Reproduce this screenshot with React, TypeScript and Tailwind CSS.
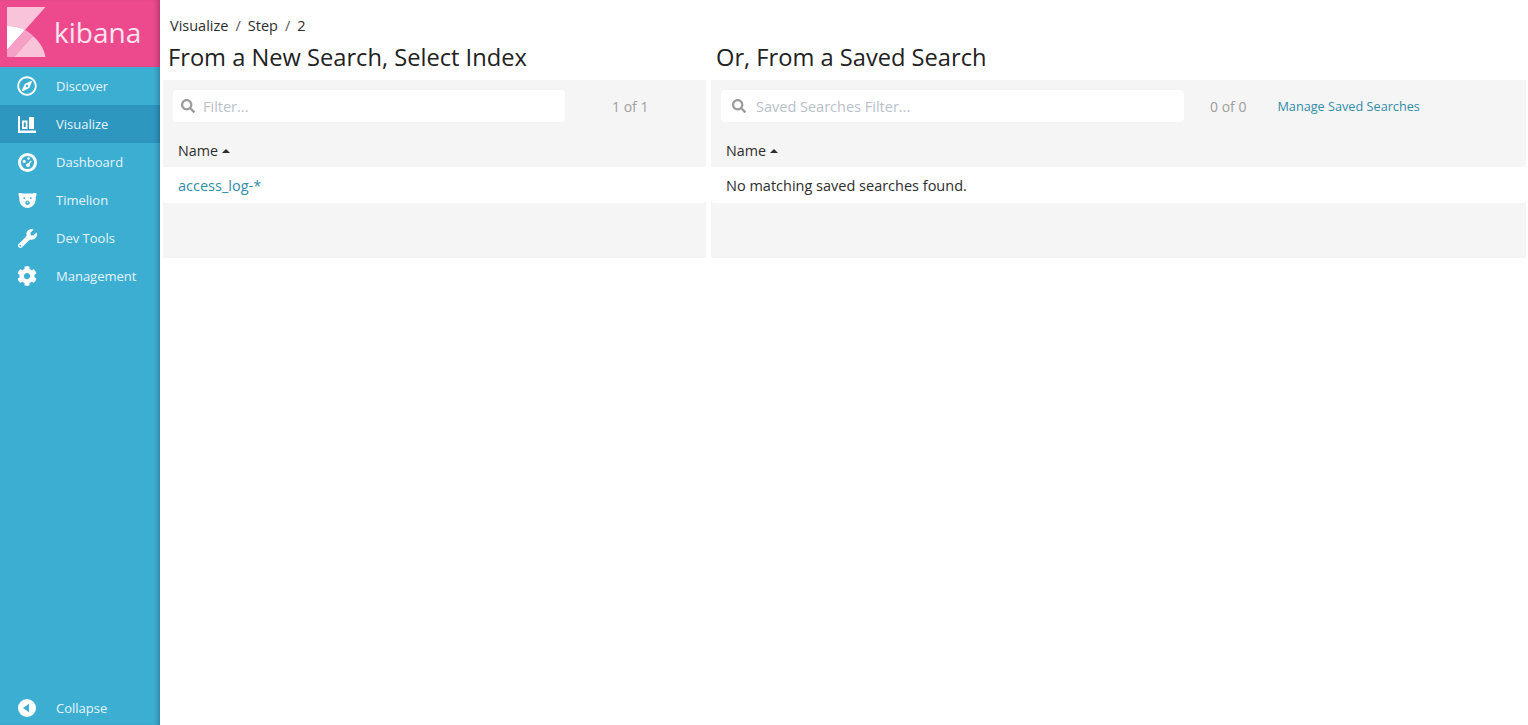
import React from "react";
import { FaRegCompass, FaWrench, FaCog, FaSearch } from "react-icons/fa";

const Bars = () => (
  <svg width="18" height="17" viewBox="0 0 18 17">
    <path d="M0 0h2v14.500h16V17H0z" fill="#fff" />
    <path fillRule="evenodd" d="M4 4.500h5.500V13H4zM5.800 6.500v4.500h1.900V6.500z" fill="#fff" />
    <rect x="11" y="1" width="5" height="12" fill="#fff" />
  </svg>
);

const Gauge = () => (
  <svg width="19" height="19" viewBox="0 0 18 18">
    <circle cx="9" cy="9" r="7.600" fill="none" stroke="#fff" strokeWidth="2.800" />
    <circle cx="5.800" cy="8" r="1.500" fill="#fff" />
    <circle cx="10" cy="5.200" r="1.200" fill="#fff" />
    <circle cx="9.500" cy="11.500" r="1.800" fill="#fff" />
    <path d="M9.500 11.500 12.500 7.500" stroke="#fff" strokeWidth="1.300" />
  </svg>
);

const Bear = () => (
  <svg width="19" height="15" viewBox="0 0 18 15">
    <path
      fillRule="evenodd"
      fill="#fff"
      d="M0 .8C0 .3.500 0 2 0c1 0 1.700.2 2 .6h10c.3-.4 1-.6 2-.6 1.500 0 2 .3 2 .8 0 1.500-.2 2.700-.7 3.500 0 1.500-.1 3.200-.5 4.500C15.500 12.800 12.500 15 9 15s-6.500-2.200-7.800-6.200C.8 7.500.7 5.800.7 4.300.2 3.500 0 2.300 0 .8ZM5.700 4.200a.9.9 0 1 0 0 1.800.9.9 0 0 0 0-1.800Zm6.600 0a.9.9 0 1 0 0 1.800.9.9 0 0 0 0-1.800ZM9 7.500c-1.400 0-2.300 1-2.300 2.300 0 1.300 1 2.100 2.300 2.100s2.300-.8 2.300-2.100c0-1.300-.9-2.300-2.300-2.300Z"
    />
    <path d="M7.800 8.700h2.400L9 10.200z" fill="#fff" />
  </svg>
);

const Collapse = () => (
  <svg width="18" height="18" viewBox="0 0 18 18">
    <circle cx="9" cy="9" r="9" fill="#fff" />
    <path d="M5 9l6-4.300v8.600z" fill="#3caed2" />
  </svg>
);

const Logo = () => (
  <svg width="39" height="50" viewBox="0 0 39 50" className="shrink-0">
    <path d="M0 0H38.500L18 23C13 20.500 7 19 0 19Z" fill="#f9c3da" />
    <path d="M0 19C7 19 13 20.500 18 23L0 43Z" fill="#fff" />
    <path d="M0 43 18 23C21 24.500 24 26.500 26 29L7 50H0Z" fill="#f5a0c4" />
    <path d="M7 50 26 29C32.500 34.500 37 42 38.500 50Z" fill="#f9c3da" />
  </svg>
);

const nav = [
  { label: "Discover", icon: <FaRegCompass size={20} color="#fff" /> },
  { label: "Visualize", icon: <Bars />, active: true },
  { label: "Dashboard", icon: <Gauge /> },
  { label: "Timelion", icon: <Bear /> },
  { label: "Dev Tools", icon: <FaWrench size={19} color="#fff" /> },
  { label: "Management", icon: <FaCog size={20} color="#fff" /> },
];

function NavItem({ label, icon, active }: { label: string; icon: React.ReactNode; active?: boolean }) {
  return (
    <div className={`flex h-[38px] items-center ${active ? "bg-[#2d97c0] shadow-[inset_-5px_0_5px_-3px_rgba(0,0,0,0.25)]" : ""}`}>
      <span className="flex w-[54px] shrink-0 justify-center">{icon}</span>
      <span className="ml-[2px] pt-[2px] text-[13px] text-[#e6f5fa]">{label}</span>
    </div>
  );
}

function SearchBox({ placeholder, width, gap, textGap }: { placeholder: string; width: string; gap: string; textGap: string }) {
  return (
    <div className={`flex h-[32px] items-center rounded-[4px] bg-white ${width}`}>
      <FaSearch size={14} color="#9b9b9b" className={`shrink-0 ${gap}`} />
      <span className={`pt-[2px] text-[14.500px] text-[#b9c0c9] ${textGap}`}>{placeholder}</span>
    </div>
  );
}

function Panel({ top, row }: { top: React.ReactNode; row: React.ReactNode }) {
  return (
    <div className="h-[178px] bg-[#f5f5f5]">
      <div className="flex h-[52px] items-center pl-[10px]">{top}</div>
      <div className="flex h-[35px] items-center pl-[15px] pt-[2px] text-[14.300px] text-[#2d2d2d]">
        Name
        <span className="ml-[4px] h-0 w-0 border-x-[4.500px] border-b-[4.500px] border-x-transparent border-b-[#2d2d2d]" />
      </div>
      <div className="flex h-[36px] items-center rounded-b-[4px] bg-white pl-[15px] pt-[2px] text-[14.500px]">{row}</div>
    </div>
  );
}

export default function App() {
  return (
    <div className="flex h-[725px] w-[1528px] overflow-hidden bg-white font-['Open_Sans',sans-serif]">
      <aside className="flex h-full w-[160px] shrink-0 flex-col bg-[#3caed2] shadow-[inset_-5px_0_5px_-3px_rgba(0,0,0,0.25)]">
        <div className="flex h-[67px] shrink-0 items-start bg-[#ec4a8d] pl-[7px] pt-[7px] shadow-[inset_-5px_0_5px_-3px_rgba(0,0,0,0.25)]">
          <Logo />
          <span className="ml-[8px] mt-[6px] text-[28px] font-medium leading-[38px] text-[#fde4ef]">kibana</span>
        </div>
        {nav.map((n) => (
          <NavItem key={n.label} {...n} />
        ))}
        <div className="mb-[-2px] mt-auto">
          <NavItem label="Collapse" icon={<Collapse />} />
        </div>
      </aside>
      <main className="min-w-0 flex-1 pl-[3px]">
        <div className="flex h-[35px] items-end pl-[7px] text-[14.500px] leading-[19px] text-[#2d2d2d]">
          <span>Visualize</span>
          <span className="mx-[7px] text-[#555]">/</span>
          <span>Step</span>
          <span className="mx-[7px] text-[#555]">/</span>
          <span>2</span>
        </div>
        <div className="flex gap-[5px]">
          <div className="w-[543px] shrink-0">
            <h2 className="ml-[5px] h-[45px] pt-[4px] text-[23.660px] leading-[36px] text-[#222]">From a New Search, Select Index</h2>
            <Panel
              top={
                <>
                  <SearchBox placeholder="Filter..." width="w-[392px]" gap="ml-[8px]" textGap="ml-[8px]" />
                  <span className="ml-[47px] text-[14px] text-[#a0a0a0]">1 of 1</span>
                </>
              }
              row={<span className="text-[#328caa]">access_log-*</span>}
            />
          </div>
          <div className="w-[815px] shrink-0">
            <h2 className="ml-[5px] h-[45px] pt-[4px] text-[23.660px] leading-[36px] text-[#222]">Or, From a Saved Search</h2>
            <Panel
              top={
                <>
                  <SearchBox placeholder="Saved Searches Filter..." width="w-[463px]" gap="ml-[11px]" textGap="ml-[10px]" />
                  <span className="ml-[26px] text-[14px] text-[#a0a0a0]">0 of 0</span>
                  <span className="ml-[31px] pt-[1px] text-[12.700px] text-[#328caa]">Manage Saved Searches</span>
                </>
              }
              row={<span className="text-[#2d2d2d]">No matching saved searches found.</span>}
            />
          </div>
        </div>
      </main>
    </div>
  );
}
